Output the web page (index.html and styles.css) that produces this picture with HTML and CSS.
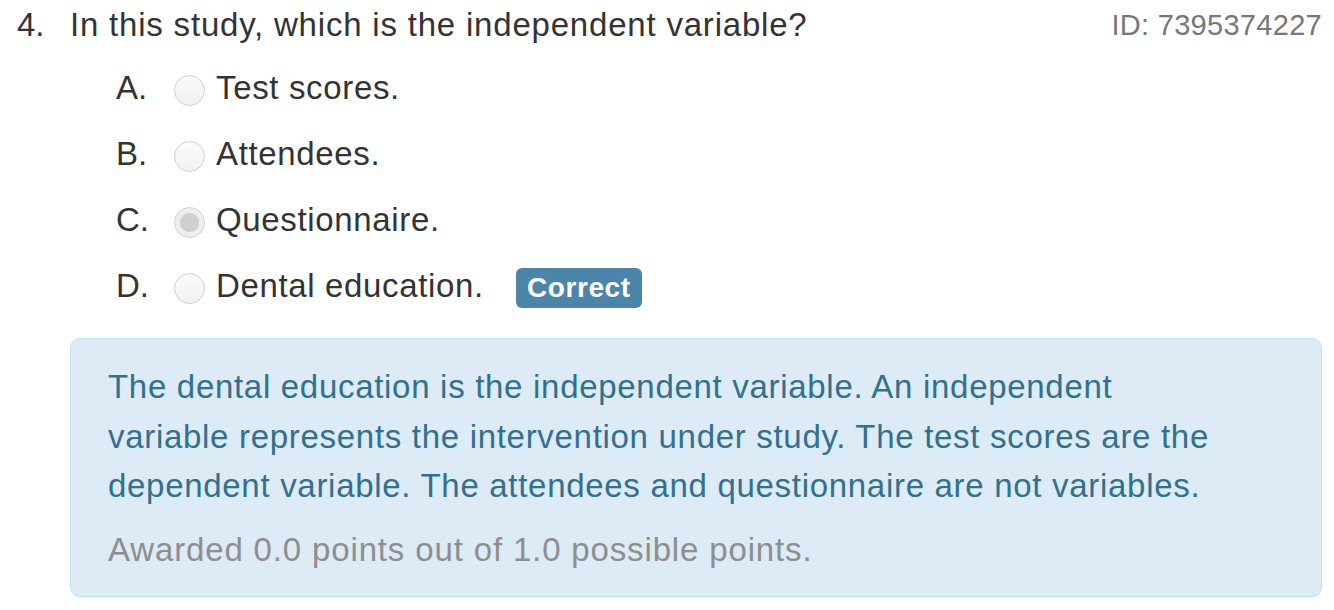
FILE: index.html
```html
<!DOCTYPE html>
<html>
<head>
<meta charset="utf-8">
<link rel="stylesheet" href="styles.css">
</head>
<body>
<div class="question">
  <div class="q-header">
    <div class="q-title"><span class="q-num">4.</span><span class="q-text">In this study, which is the independent variable?</span></div>
    <div class="q-id">ID: 7395374227</div>
  </div>
  <div class="options">
    <div class="option"><span class="opt-letter">A.</span><span class="radio"></span><span class="opt-text">Test scores.</span></div>
    <div class="option"><span class="opt-letter">B.</span><span class="radio"></span><span class="opt-text">Attendees.</span></div>
    <div class="option"><span class="opt-letter">C.</span><span class="radio checked"></span><span class="opt-text">Questionnaire.</span></div>
    <div class="option"><span class="opt-letter">D.</span><span class="radio"></span><span class="opt-text">Dental education.</span><span class="badge">Correct</span></div>
  </div>
  <div class="feedback">
    <p class="explanation">The dental education is the independent variable. An independent variable represents the intervention under study. The test scores are the dependent variable. The attendees and questionnaire are not variables.</p>
    <p class="awarded">Awarded 0.0 points out of 1.0 possible points.</p>
  </div>
</div>
</body>
</html>
```

FILE: styles.css
```css
html, body {
  margin: 0;
  padding: 0;
  background: #ffffff;
}
body {
  font-family: "Liberation Sans", Arial, sans-serif;
  color: #333333;
  width: 1334px;
  height: 610px;
  overflow: hidden;
}
.q-header {
  display: flex;
  justify-content: space-between;
  align-items: center;
  padding: 0 12px 0 17px;
  height: 50px;
}
.q-title {
  display: flex;
  font-size: 33px;
  line-height: 50px;
  color: #333333;
}
.q-num {
  width: 53px;
}
.q-text {
  letter-spacing: 0.8px;
}
.q-id {
  font-size: 29px;
  line-height: 50px;
  color: #777777;
  letter-spacing: 0.3px;
}
.options {
  padding-left: 116px;
  margin-top: 5px;
}
.option {
  display: flex;
  align-items: center;
  height: 66px;
  font-size: 33px;
}
.opt-letter {
  width: 58px;
}
.opt-text {
  letter-spacing: 0.65px;
}
.radio {
  width: 29px;
  height: 29px;
  border-radius: 50%;
  border: 1px solid #d0d0d0;
  background: linear-gradient(#fbfbfb, #f1f1f1);
  margin-right: 11px;
  box-sizing: content-box;
  position: relative;
  top: 2px;
}
.radio.checked {
  background: radial-gradient(circle, #cfcfcf 0, #cfcfcf 9px, #ececec 10px, #f3f3f3 100%);
}
.badge {
  margin-left: 32px;
  background: #4b86aa;
  color: #ffffff;
  font-weight: bold;
  font-size: 28px;
  letter-spacing: 0.6px;
  line-height: 40px;
  padding: 0 11px;
  border-radius: 6px;
  position: relative;
  top: 2px;
}
.feedback {
  margin: 19px 12px 0 70px;
  background: #dcebf6;
  border: 1.5px solid #bfe3ef;
  border-radius: 10px;
  padding: 23px 105px 21px 37px;
  height: 259px;
  box-sizing: border-box;
}
.feedback p {
  margin: 0;
  font-size: 33px;
  line-height: 49.5px;
  letter-spacing: 0.7px;
}
.explanation {
  color: #31708f;
}
.feedback p.awarded {
  color: #8e8e8e;
  margin-top: 14px;
  letter-spacing: 0.85px;
}
```
